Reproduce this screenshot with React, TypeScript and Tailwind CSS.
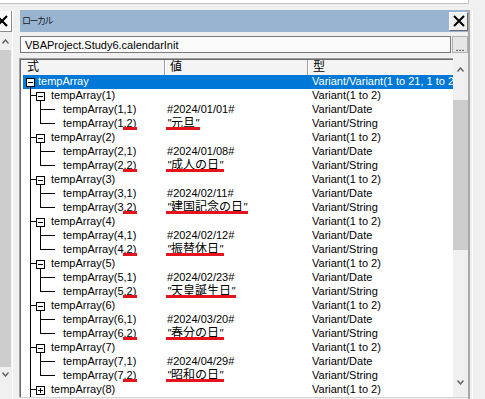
import type { ReactNode } from 'react';
import clsx from 'clsx';

const holidays: [string, string][] = [
  ['2024/01/01', '元旦'],
  ['2024/01/08', '成人の日'],
  ['2024/02/11', '建国記念の日'],
  ['2024/02/12', '振替休日'],
  ['2024/02/23', '天皇誕生日'],
  ['2024/03/20', '春分の日'],
  ['2024/04/29', '昭和の日'],
];

// tree connector piece: vertical line on the left edge, optional elbow at mid height
function Guide({ className, vert, elbow }: { className: string; vert: 'full' | 'top'; elbow?: boolean }) {
  return (
    <div className={clsx('flex h-[14px] shrink-0 flex-col', className)}>
      <div className={clsx('h-[7px] border-l border-black', elbow && 'border-b')} />
      <div className={clsx('h-[7px]', vert === 'full' && 'border-l border-black')} />
    </div>
  );
}

function Toggle({ open, stem }: { open: boolean; stem?: boolean }) {
  return (
    <div className="flex h-[14px] w-[9px] shrink-0 flex-col">
      <div className="h-[3px]" />
      <div className="relative flex h-[9px] w-[9px] items-center justify-center border border-black bg-white">
        <div className="h-px w-[5px] bg-black" />
        {!open && <div className="absolute h-[5px] w-px bg-black" />}
      </div>
      {stem && <div className="ml-[4px] h-[2px] border-l border-black" />}
    </div>
  );
}

function Mark({ children }: { children: ReactNode }) {
  return (
    <span className="relative block h-[14px]">
      {children}
      <span className="absolute left-[-1px] right-[-1px] top-[10px] h-[3px] bg-[#e5131d]" />
    </span>
  );
}

function Q() {
  return <span className="italic">"</span>;
}

function Chevron({ up }: { up?: boolean }) {
  return (
    <svg width="7" height="5" viewBox="0 0 7 5">
      <polyline
        points={up ? '0.5,4.5 3.5,1 6.5,4.5' : '0.5,0.5 3.5,4 6.5,0.5'}
        fill="none"
        stroke="#606060"
        strokeWidth="1.4"
      />
    </svg>
  );
}

function Row({ name, value, type, selected }: { name: ReactNode; value?: ReactNode; type: string; selected?: boolean }) {
  return (
    <div className="flex h-[14px] shrink-0 whitespace-nowrap leading-[12px]">
      <div className="flex w-[144px] shrink-0 overflow-hidden">{name}</div>
      <div className={clsx('flex w-[143px] shrink-0 pl-[2px]', selected && 'bg-[#0078d7]')}>{value}</div>
      <div className={clsx('min-w-0 flex-1 overflow-hidden pl-[4px]', selected && 'bg-[#0078d7] text-white')}>{type}</div>
    </div>
  );
}

export default function App() {
  return (
    <div className="flex h-[399px] w-[485px] flex-col overflow-hidden bg-[#f0f0f0] font-['Liberation_Sans','Noto_Sans_CJK_JP',sans-serif] text-[11px] leading-[14px] text-black">
      {/* bottom edge of the pane above */}
      <div className="h-[10px] shrink-0">
        <div className="h-[4px] w-[469px] border-b border-r border-[#c4c4c4] bg-white" />
      </div>

      <div className="flex min-h-0 flex-1">
        {/* neighbouring pane on the left, mostly hidden */}
        <div className="flex w-[19px] shrink-0">
          <div className="flex w-[12px] flex-col">
            <div className="mt-[1px] h-[21px] border-b border-r border-[#8a8a8a] bg-white">
              <svg width="11" height="20" viewBox="0 0 11 20" className="overflow-visible">
                <path d="M-3 5 L7 15 M7 5 L-3 15" stroke="#000" strokeWidth="2.2" />
              </svg>
            </div>
            <div className="flex h-[18px] w-[11px] items-center justify-center">
              <Chevron up />
            </div>
            <div className="h-[317px] w-[11px] bg-[#cdcdcd]" />
            <div className="flex w-[11px] justify-center pt-[5px]">
              <Chevron />
            </div>
          </div>
          <div className="w-[7px] border-l border-white" />
        </div>

        {/* locals window */}
        <div className="flex w-[449px] shrink-0 flex-col">
          <div className="ml-[1px] flex h-[22px] items-center justify-between bg-[#99b4d1] pl-[2px]">
            <span className="font-['Noto_Sans_CJK_JP'] text-[9px] leading-[10px] tracking-[-1.5px] text-[#1a1a1a]">ローカル</span>
            <div className="flex h-[19px] w-[19px] items-center justify-center border border-b-[#696969] border-l-white border-r-[#696969] border-t-white bg-[#f0f0f0]">
              <svg width="12" height="12" viewBox="0 0 12 12">
                <path d="M1 1 L11 11 M11 1 L1 11" stroke="#000" strokeWidth="2" />
              </svg>
            </div>
          </div>

          <div className="ml-[1px] mt-[4px] flex h-[17px]">
            <div className="flex flex-1 items-center border border-[#7a7a7a] bg-[#fbfbfb] pl-[4px] leading-[12px]">
              VBAProject.Study6.calendarInit
            </div>
            <div className="ml-[1px] flex w-[16px] items-end justify-center border border-[#b0b0b0] bg-[#e6e6e6] pb-[1px] leading-[8px]">
              ...
            </div>
          </div>

          <div className="mt-[5px] flex h-[340px] border-b border-[#d4d4d4]">
            <div className="flex w-[434px] shrink-0 border-l border-t border-[#a0a0a0]">
              <div className="flex flex-1 flex-col overflow-hidden border-l border-t border-[#696969] bg-white">
                <div className="flex h-[15px] shrink-0 bg-[#f4f4f4] text-[12px] leading-[15px]">
                  <div className="w-[144px] shrink-0 border-r border-[#a0a0a0] pl-[6px]">式</div>
                  <div className="w-[143px] shrink-0 border-l border-r border-l-white border-r-[#a0a0a0] pl-[4px]">値</div>
                  <div className="flex-1 border-l border-white pl-[4px]">型</div>
                </div>

                <Row
                  selected
                  name={
                    <div className="flex flex-1 pl-[2px]">
                      <div className="flex flex-1 bg-[#0078d7] pl-[3px] text-white">
                        <Toggle open stem />
                        <span className="ml-[3px]">tempArray</span>
                      </div>
                    </div>
                  }
                  type="Variant/Variant(1 to 21, 1 to 2)"
                />

                {holidays.map(([date, label], k) => {
                  const i = k + 1;
                  return (
                    <div key={i} className="flex flex-col">
                      <Row
                        name={
                          <>
                            <div className="w-[9px] shrink-0" />
                            <Guide className="w-[6px]" vert="full" elbow />
                            <Toggle open stem />
                            <span className="ml-[6px]">tempArray({i})</span>
                          </>
                        }
                        type="Variant(1 to 2)"
                      />
                      <Row
                        name={
                          <>
                            <div className="w-[9px] shrink-0" />
                            <Guide className="w-[10px]" vert="full" />
                            <Guide className="w-[15px]" vert="full" elbow />
                            <span className="ml-[8px]">tempArray({i},1)</span>
                          </>
                        }
                        value={<span>#{date}#</span>}
                        type="Variant/Date"
                      />
                      <Row
                        name={
                          <>
                            <div className="w-[9px] shrink-0" />
                            <Guide className="w-[10px]" vert="full" />
                            <Guide className="w-[15px]" vert="top" elbow />
                            <span className="ml-[8px]">tempArray({i}</span>
                            <Mark>,2)</Mark>
                          </>
                        }
                        value={
                          <Mark>
                            <Q />
                            <span className="text-[12px]">{label}</span>
                            <Q />
                          </Mark>
                        }
                        type="Variant/String"
                      />
                    </div>
                  );
                })}

                <Row
                  name={
                    <>
                      <div className="w-[9px] shrink-0" />
                      <Guide className="w-[6px]" vert="full" elbow />
                      <Toggle open={false} />
                      <span className="ml-[6px]">tempArray(8)</span>
                    </>
                  }
                  type="Variant(1 to 2)"
                />
                <Row
                  name={
                    <>
                      <div className="w-[9px] shrink-0" />
                      <Guide className="w-[6px]" vert="full" elbow />
                    </>
                  }
                  type=""
                />
              </div>
            </div>

            {/* vertical scrollbar */}
            <div className="flex w-[15px] shrink-0 flex-col">
              <div className="flex h-[42px] justify-center pt-[9px]">
                <Chevron up />
              </div>
              <div className="h-[150px] bg-[#cdcdcd]" />
              <div className="flex-1" />
              <div className="flex h-[17px] justify-center">
                <Chevron />
              </div>
            </div>
          </div>
        </div>

        {/* edge of the outer frame */}
        <div className="flex-1 border-l-2 border-[#a8a8a8]">
          <div className="ml-[2px] h-full border-l border-white" />
        </div>
      </div>
    </div>
  );
}
